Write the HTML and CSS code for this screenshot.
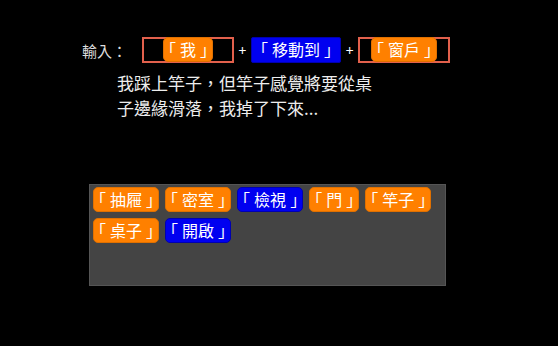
FILE: index.html
```html
<!DOCTYPE html>
<html lang="zh-Hant">
<head>
    <meta charset="UTF-8">
    <title>輸入</title>
    <link rel="stylesheet" href="styles.css">
</head>
<body>
    <div class="stage">
        <div class="input-row">
            <span class="label">輸入：</span>
            <div class="slot"><span class="chip noun"><i class="ob">「</i>我<i class="cb">」</i></span></div>
            <span class="plus">+</span>
            <span class="chip verb wide"><i class="ob">「</i>移動到<i class="cb">」</i></span>
            <span class="plus">+</span>
            <div class="slot"><span class="chip noun"><i class="ob">「</i>窗戶<i class="cb">」</i></span></div>
        </div>

        <p class="story">我踩上竿子，但竿子感覺將要從桌<br>子邊緣滑落，我掉了下來...</p>

        <div class="panel">
            <span class="chip noun"><i class="ob">「</i>抽屜<i class="cb">」</i></span>
            <span class="chip noun"><i class="ob">「</i>密室<i class="cb">」</i></span>
            <span class="chip verb"><i class="ob">「</i>檢視<i class="cb">」</i></span>
            <span class="chip noun"><i class="ob">「</i>門<i class="cb">」</i></span>
            <span class="chip noun"><i class="ob">「</i>竿子<i class="cb">」</i></span>
            <span class="chip noun"><i class="ob">「</i>桌子<i class="cb">」</i></span>
            <span class="chip verb"><i class="ob">「</i>開啟<i class="cb">」</i></span>
        </div>
    </div>
</body>
</html>
```

FILE: styles.css
```css
body {
    margin: 0;
    background-color: #000;
    color: #fff;
    font-family: "Noto Sans CJK TC", "Noto Sans", sans-serif;
}

.stage {
    padding: 37px 0 0 82px;
}

.input-row {
    display: flex;
    align-items: center;
    height: 26px;
}

.label {
    width: 60px;
    font-size: 15px;
    color: #ddd;
}

.slot {
    width: 92px;
    height: 26px;
    box-sizing: border-box;
    border: 2px solid #e2604c;
    background-color: #000;
    display: flex;
    justify-content: center;
}

.slot .chip {
    height: 25px;
    margin-top: -2px;
    line-height: 23px;
}

.plus {
    width: 17px;
    text-align: center;
    font-size: 14px;
}

.chip {
    display: inline-block;
    box-sizing: border-box;
    height: 25px;
    padding: 0;
    border-radius: 5px;
    font-size: 16px;
    line-height: 23px;
    color: #fff;
    white-space: nowrap;
}

/* corner brackets sit at the chip edges */
.ob,
.cb {
    font-style: normal;
}

.ob {
    margin-left: -4px;
    margin-right: 4px;
}

.cb {
    margin-left: 4px;
    margin-right: -4px;
}

.noun {
    background-color: #ff8000;
    border: 1px solid #e07000;
}

.verb {
    background-color: #0000f0;
    border: 1px solid #0000b0;
}

.wide {
    height: 26px;
    padding: 0 4px;
    border-radius: 2px;
}

.story {
    margin: 7px 0 0 35px;
    font-size: 17px;
    line-height: 25px;
    color: #eee;
}

.panel {
    width: 357px;
    height: 102px;
    box-sizing: border-box;
    margin: 64px 0 0 7px;
    padding: 2px 3px;
    background-color: #444;
    border: 1px solid #555;
    display: flex;
    flex-wrap: wrap;
    align-content: flex-start;
    gap: 6px;
}
```
